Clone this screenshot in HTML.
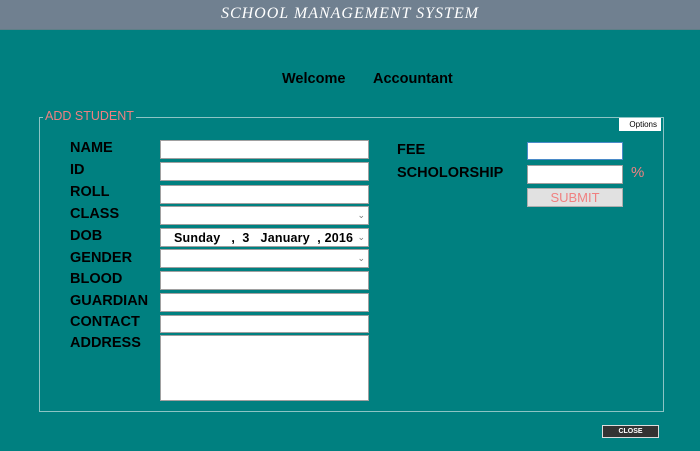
<!DOCTYPE html>
<html><head><style>
body{margin:0;width:700px;height:451px;background:#008080;position:relative;overflow:hidden;font-family:"Liberation Sans",Arial,sans-serif}
.hdr{position:absolute;left:0;top:0;width:700px;height:29px;background:#708090;border-bottom:1px solid #5f7f88}
.hdr span{position:absolute;left:0;width:700px;top:5px;text-align:center;color:#fff;font-family:"Liberation Serif",serif;font-style:italic;font-size:16px;letter-spacing:1px}
.t{position:absolute;font-size:14.5px;font-weight:bold;color:#000}
.w{position:absolute;font-size:14.5px;font-weight:bold;color:#000}
.in{position:absolute;background:#fff;border:1px solid #a0a0a0;box-sizing:border-box}
.grp{position:absolute;left:39px;top:117px;width:625px;height:295px;border:1px solid #8cc4c4;box-sizing:border-box}
.cv{position:absolute;right:3px;top:3px;font-size:9px;color:#777}
</style></head><body>
<div class="hdr"><span>SCHOOL MANAGEMENT SYSTEM</span></div>
<div class="w" style="left:282px;top:71px">Welcome</div>
<div class="w" style="left:373px;top:71px">Accountant</div>
<div class="grp"></div>
<div style="position:absolute;left:43px;top:109px;background:#008080;color:#f08080;font-size:12.5px;padding:0 2px">ADD STUDENT</div>
<div style="position:absolute;left:619px;top:118px;width:42px;height:13px;background:#fff;font-size:8px;line-height:13px;text-align:right;padding-right:4px;box-sizing:border-box">Options</div>
<div class="t" style="left:70px;top:140px">NAME</div>
<div class="t" style="left:70px;top:162px">ID</div>
<div class="t" style="left:70px;top:184px">ROLL</div>
<div class="t" style="left:70px;top:206px">CLASS</div>
<div class="t" style="left:70px;top:228px">DOB</div>
<div class="t" style="left:70px;top:250px">GENDER</div>
<div class="t" style="left:70px;top:271px">BLOOD</div>
<div class="t" style="left:70px;top:293px">GUARDIAN</div>
<div class="t" style="left:70px;top:314px">CONTACT</div>
<div class="t" style="left:70px;top:335px">ADDRESS</div>
<div class="in" style="left:160px;top:140px;width:209px;height:19px"></div>
<div class="in" style="left:160px;top:162px;width:209px;height:19px"></div>
<div class="in" style="left:160px;top:185px;width:209px;height:19px"></div>
<div class="in" style="left:160px;top:206px;width:209px;height:19px"><span class="cv">&#8964;</span></div>
<div class="in" style="left:160px;top:228px;width:209px;height:19px"><span style="position:absolute;left:13px;top:2px;font-size:12.5px;font-weight:bold;white-space:pre;letter-spacing:0.2px">Sunday   ,  3   January  , 2016</span><span class="cv">&#8964;</span></div>
<div class="in" style="left:160px;top:249px;width:209px;height:19px"><span class="cv">&#8964;</span></div>
<div class="in" style="left:160px;top:271px;width:209px;height:19px"></div>
<div class="in" style="left:160px;top:293px;width:209px;height:19px"></div>
<div class="in" style="left:160px;top:315px;width:209px;height:18px"></div>
<div class="in" style="left:160px;top:335px;width:209px;height:66px"></div>
<div class="t" style="left:397px;top:142px">FEE</div>
<div class="t" style="left:397px;top:165px">SCHOLORSHIP</div>
<div class="in" style="left:527px;top:142px;width:96px;height:18px;border-color:#4a8ac8"></div>
<div class="in" style="left:527px;top:165px;width:96px;height:19px"></div>
<div style="position:absolute;left:631px;top:164px;color:#f08080;font-size:15px">%</div>
<div style="position:absolute;left:527px;top:188px;width:96px;height:19px;background:#e1e1e1;border:1px solid #adadad;box-sizing:border-box;color:#f08080;font-size:13px;text-align:center;line-height:17px">SUBMIT</div>
<div style="position:absolute;left:602px;top:425px;width:57px;height:13px;background:#333;border:1px solid #ddd;box-sizing:border-box;color:#fff;font-size:7px;font-weight:bold;text-align:center;line-height:11px">CLOSE</div>
</body></html>
